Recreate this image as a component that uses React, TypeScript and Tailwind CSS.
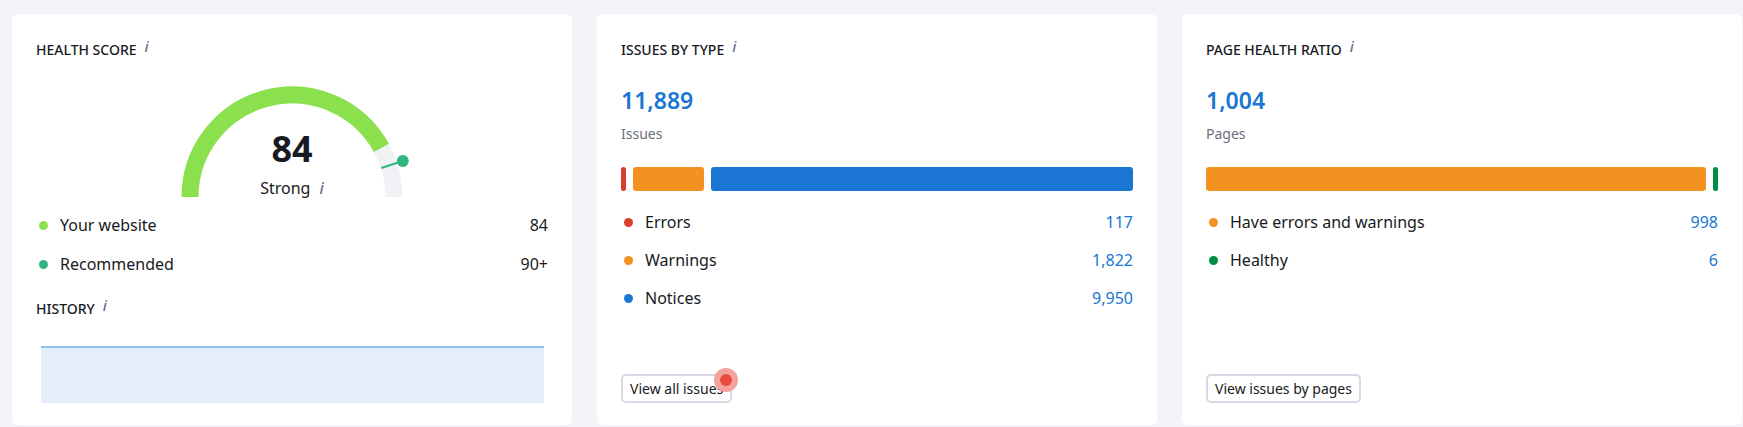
import React from "react";

const BLUE = "#1a76d2";

function InfoI({ className = "" }: { className?: string }) {
  return (
    <span className={`relative -top-[4px] ml-[8px] text-[15px] italic font-medium text-[#5f7391] ${className}`}>
      i
    </span>
  );
}

function CardTitle({ children }: { children: React.ReactNode }) {
  return (
    <div className="flex items-center text-[14px] font-medium leading-6 text-[#171a22]">
      <span>{children}</span>
      <InfoI />
    </div>
  );
}

function LegendRow({
  color,
  label,
  value,
  valueClass = "text-[#171a22]",
}: {
  color: string;
  label: string;
  value: string;
  valueClass?: string;
}) {
  return (
    <div className="flex h-6 items-center justify-between text-[16px] leading-6">
      <div className="flex items-center">
        <span className="ml-[3px] mr-[12px] h-[9px] w-[9px] rounded-full" style={{ background: color }} />
        <span className="text-[#171a22]">{label}</span>
      </div>
      <span className={valueClass}>{value}</span>
    </div>
  );
}

/** Semicircle gauge: score and recommended marker. */
function Gauge({ score, recommended }: { score: number; recommended: number }) {
  const cx = 125;
  const cy = 111;
  const r = 102;
  const pt = (deg: number, rad: number) => {
    const a = (deg * Math.PI) / 180;
    return [cx + rad * Math.cos(a), cy - rad * Math.sin(a)];
  };
  const scoreAngle = 180 - (score / 100) * 180;
  const recAngle = 180 - (recommended / 100) * 180;
  const [ex, ey] = pt(scoreAngle, r);
  const [l1x, l1y] = pt(recAngle, 94);
  const [l2x, l2y] = pt(recAngle, 114);
  const [dx, dy] = pt(recAngle, 116.5);

  return (
    <div className="relative mx-auto mt-6 h-[113px] w-[250px]">
      <svg width="250" height="113" viewBox="0 0 250 113" className="block">
        <path d={`M ${cx - r} ${cy} A ${r} ${r} 0 0 1 ${cx + r} ${cy}`} fill="none" stroke="#f1f2f6" strokeWidth="17" />
        <path d={`M ${cx - r} ${cy} A ${r} ${r} 0 0 1 ${ex} ${ey}`} fill="none" stroke="#8be04e" strokeWidth="17" />
        <line x1={l1x} y1={l1y} x2={l2x} y2={l2y} stroke="#2fb57d" strokeWidth="2.2" />
        <circle cx={dx} cy={dy} r="6" fill="#2fb57d" />
      </svg>
      <div className="absolute inset-x-0 top-[43px] flex flex-col items-center">
        <div className="text-[36px] font-bold leading-10 text-[#171a22]">{score}</div>
        <div className="mt-[7px] flex items-center text-[16px] leading-6 text-[#171a22]">
          <span>Strong</span>
          <span className="ml-[9px] text-[16px] font-medium italic text-[#5f7391]">i</span>
        </div>
      </div>
    </div>
  );
}

function HealthScoreCard() {
  return (
    <div className="flex h-[411px] w-[560px] shrink-0 flex-col rounded-md bg-white px-6 pt-6">
      <CardTitle>HEALTH SCORE</CardTitle>
      <Gauge score={84} recommended={90} />
      <div className="mt-[14px] flex flex-col gap-[15px]">
        <LegendRow color="#8be04e" label="Your website" value="84" />
        <LegendRow color="#2fb57d" label="Recommended" value="90+" />
      </div>
      <div className="mt-[21px]">
        <CardTitle>HISTORY</CardTitle>
      </div>
      <div className="ml-[5px] mr-[4px] mt-[25px] h-[57px] border-t-2 border-[#90c2f2] bg-[#e4eefa]" />
    </div>
  );
}

type Segment = { color: string; width: string };
type Row = { color: string; label: string; value: string };

function BreakdownCard({
  title,
  total,
  unit,
  segments,
  rows,
  button,
  badge,
}: {
  title: string;
  total: string;
  unit: string;
  segments: Segment[];
  rows: Row[];
  button: string;
  badge?: boolean;
}) {
  return (
    <div className="flex h-[411px] w-[560px] shrink-0 flex-col rounded-md bg-white px-6 pb-[22px] pt-6">
      <CardTitle>{title}</CardTitle>
      <div className="mt-[22px] text-[23px] font-semibold leading-8" style={{ color: BLUE }}>
        {total}
      </div>
      <div className="mt-2 text-[14px] leading-5 text-[#6c6e79]">{unit}</div>
      <div className="mt-[23px] flex h-6 gap-[7px]">
        {segments.map((s, i) => (
          <div key={i} className={`h-full rounded-[3px] ${s.width}`} style={{ background: s.color }} />
        ))}
      </div>
      <div className="mt-[19px] flex flex-col gap-[14px]">
        {rows.map((r) => (
          <LegendRow key={r.label} color={r.color} label={r.label} value={r.value} valueClass="text-[#1a76d2]" />
        ))}
      </div>
      <div className="mt-auto">
        <button className="relative flex h-[29px] items-center rounded-[5px] border-2 border-[#d6d9e4] bg-white px-[7px] text-[14px] leading-5 text-[#171a22]">
          {button}
          {badge && (
            <span className="absolute -right-[8px] -top-[8px] flex h-6 w-6 items-center justify-center rounded-full bg-[#f4a39c]">
              <span className="h-3 w-3 rounded-full bg-[#e84a3c]" />
            </span>
          )}
        </button>
      </div>
    </div>
  );
}

export default function App() {
  return (
    <div className="h-[427px] w-[1743px] overflow-hidden bg-[#f3f4f8] font-['Noto_Sans',sans-serif]">
      <div className="flex gap-[25px] pl-[12px] pt-[14px]">
        <HealthScoreCard />
        <BreakdownCard
          title="ISSUES BY TYPE"
          total="11,889"
          unit="Issues"
          segments={[
            { color: "#d93f30", width: "w-[5px]" },
            { color: "#f39121", width: "w-[71px]" },
            { color: "#1a76d2", width: "flex-1" },
          ]}
          rows={[
            { color: "#d93f30", label: "Errors", value: "117" },
            { color: "#f39121", label: "Warnings", value: "1,822" },
            { color: "#1a76d2", label: "Notices", value: "9,950" },
          ]}
          button="View all issues"
          badge
        />
        <BreakdownCard
          title="PAGE HEALTH RATIO"
          total="1,004"
          unit="Pages"
          segments={[
            { color: "#f39121", width: "flex-1" },
            { color: "#018e43", width: "w-[5px]" },
          ]}
          rows={[
            { color: "#f39121", label: "Have errors and warnings", value: "998" },
            { color: "#018e43", label: "Healthy", value: "6" },
          ]}
          button="View issues by pages"
        />
      </div>
    </div>
  );
}
